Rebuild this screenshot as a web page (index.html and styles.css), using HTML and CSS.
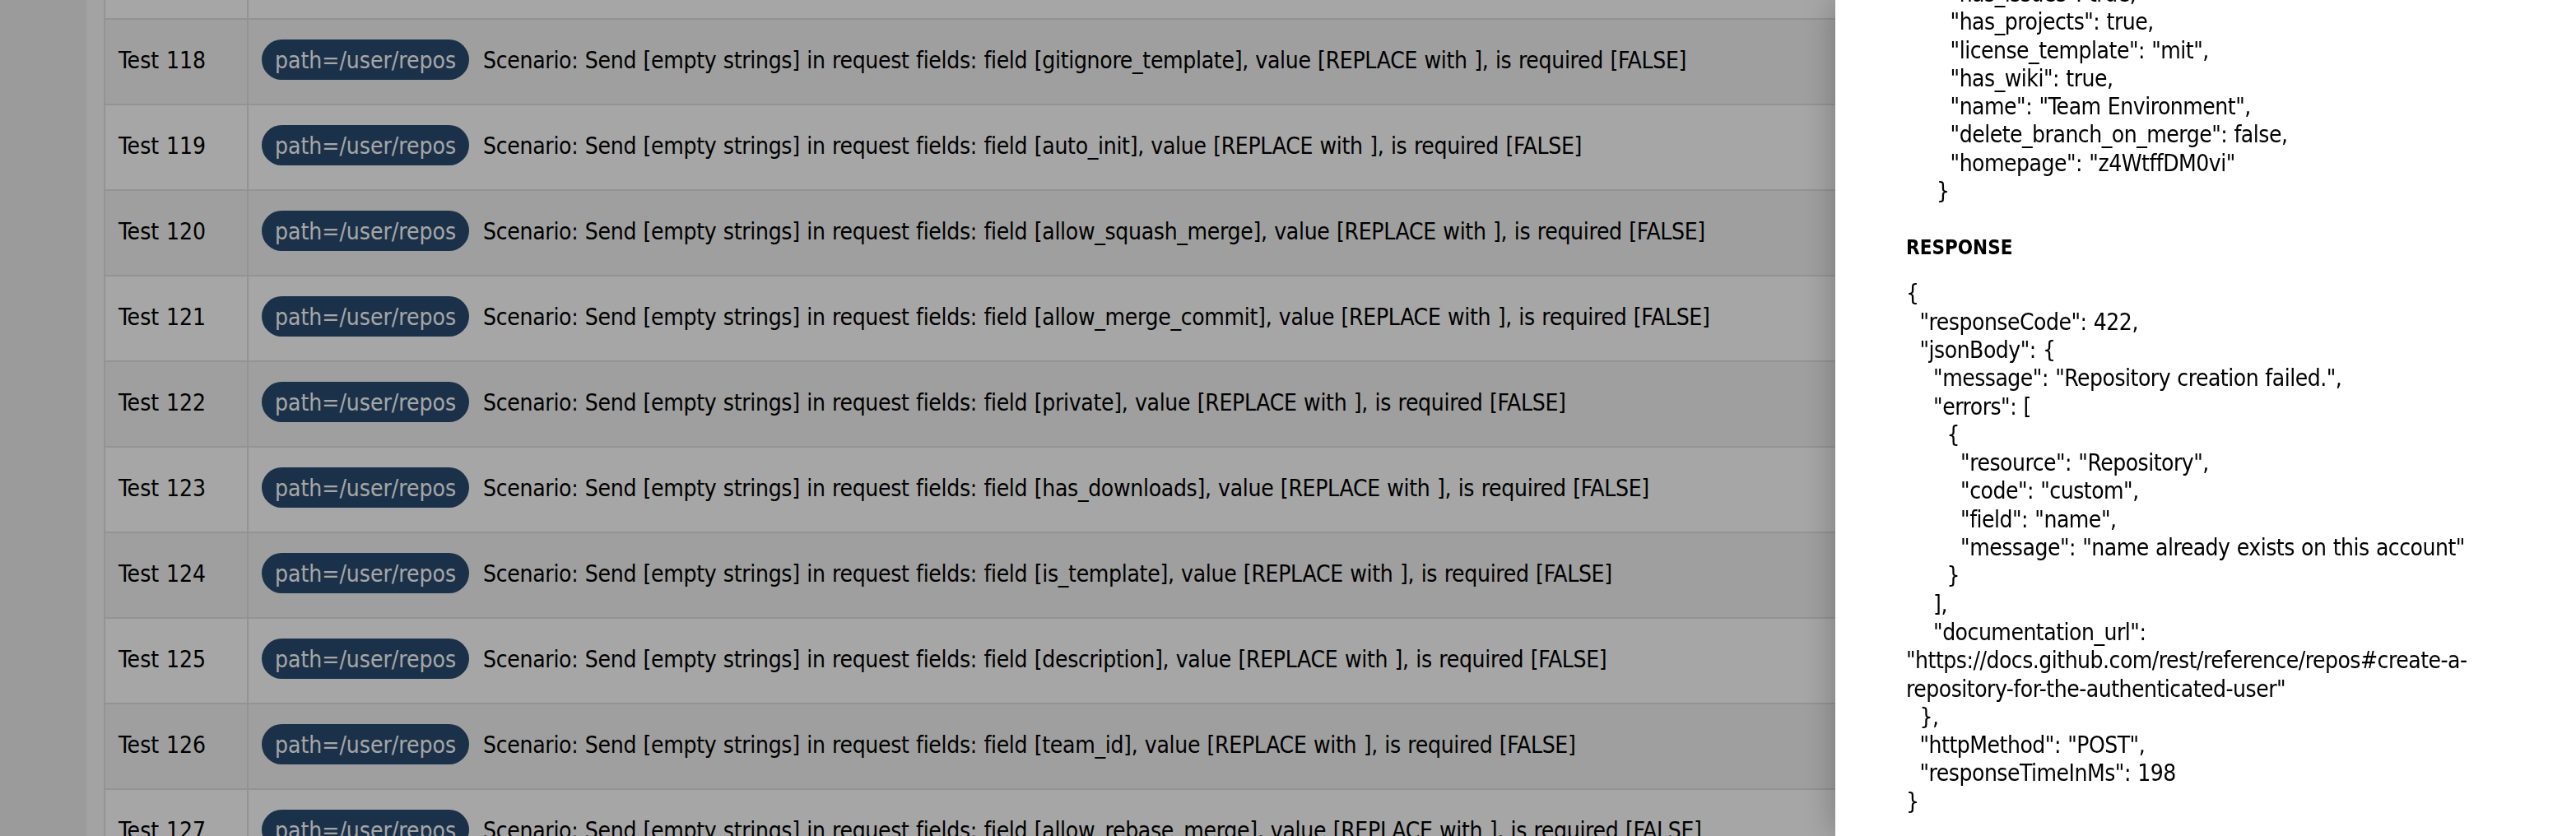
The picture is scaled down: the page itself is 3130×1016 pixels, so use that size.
FILE: index.html
```html
<!DOCTYPE html>
<html lang="en">
<head>
<meta charset="utf-8">
<title>Test run results</title>
<link rel="stylesheet" href="styles.css">
</head>
<body>
<div class="app">
  <aside class="sidebar"></aside>
  <main class="main">
    <table class="tests">
      <tbody>
        <tr><td class="name">Test 117</td><td class="desc"><span class="pill">path=/user/repos</span><span class="scenario">Scenario: Send [empty strings] in request fields: field [has_issues], value [REPLACE with ], is required [FALSE]</span></td></tr>
        <tr><td class="name">Test 118</td><td class="desc"><span class="pill">path=/user/repos</span><span class="scenario">Scenario: Send [empty strings] in request fields: field [gitignore_template], value [REPLACE with ], is required [FALSE]</span></td></tr>
        <tr><td class="name">Test 119</td><td class="desc"><span class="pill">path=/user/repos</span><span class="scenario">Scenario: Send [empty strings] in request fields: field [auto_init], value [REPLACE with ], is required [FALSE]</span></td></tr>
        <tr><td class="name">Test 120</td><td class="desc"><span class="pill">path=/user/repos</span><span class="scenario">Scenario: Send [empty strings] in request fields: field [allow_squash_merge], value [REPLACE with ], is required [FALSE]</span></td></tr>
        <tr><td class="name">Test 121</td><td class="desc"><span class="pill">path=/user/repos</span><span class="scenario">Scenario: Send [empty strings] in request fields: field [allow_merge_commit], value [REPLACE with ], is required [FALSE]</span></td></tr>
        <tr><td class="name">Test 122</td><td class="desc"><span class="pill">path=/user/repos</span><span class="scenario">Scenario: Send [empty strings] in request fields: field [private], value [REPLACE with ], is required [FALSE]</span></td></tr>
        <tr><td class="name">Test 123</td><td class="desc"><span class="pill">path=/user/repos</span><span class="scenario">Scenario: Send [empty strings] in request fields: field [has_downloads], value [REPLACE with ], is required [FALSE]</span></td></tr>
        <tr><td class="name">Test 124</td><td class="desc"><span class="pill">path=/user/repos</span><span class="scenario">Scenario: Send [empty strings] in request fields: field [is_template], value [REPLACE with ], is required [FALSE]</span></td></tr>
        <tr><td class="name">Test 125</td><td class="desc"><span class="pill">path=/user/repos</span><span class="scenario">Scenario: Send [empty strings] in request fields: field [description], value [REPLACE with ], is required [FALSE]</span></td></tr>
        <tr><td class="name">Test 126</td><td class="desc"><span class="pill">path=/user/repos</span><span class="scenario">Scenario: Send [empty strings] in request fields: field [team_id], value [REPLACE with ], is required [FALSE]</span></td></tr>
        <tr><td class="name">Test 127</td><td class="desc"><span class="pill">path=/user/repos</span><span class="scenario">Scenario: Send [empty strings] in request fields: field [allow_rebase_merge], value [REPLACE with ], is required [FALSE]</span></td></tr>
        <tr><td class="name">Test 128</td><td class="desc"><span class="pill">path=/user/repos</span><span class="scenario">Scenario: Send [empty strings] in request fields: field [delete_branch_on_merge], value [REPLACE with ], is required [FALSE]</span></td></tr>
      </tbody>
    </table>
  </main>
</div>
<div class="backdrop"></div>
<aside class="drawer">
  <div class="drawer-body">
<pre class="json request">      "has_issues": true,
      "has_projects": true,
      "license_template": "mit",
      "has_wiki": true,
      "name": "Team Environment",
      "delete_branch_on_merge": false,
      "homepage": "z4WtffDM0vi"
    }</pre>
    <h4 class="section-title">RESPONSE</h4>
<pre class="json response">{
  "responseCode": 422,
  "jsonBody": {
    "message": "Repository creation failed.",
    "errors": [
      {
        "resource": "Repository",
        "code": "custom",
        "field": "name",
        "message": "name already exists on this account"
      }
    ],
    "documentation_url": "https://docs.github.com/rest/reference/repos#create-a-repository-for-the-authenticated-user"
  },
  "httpMethod": "POST",
  "responseTimeInMs": 198
}</pre>
  </div>
</aside>
</body>
</html>
```

FILE: styles.css
```css
html, body {
  margin: 0;
  padding: 0;
  height: 100%;
  overflow: hidden;
}

body {
  font-family: "DejaVu Sans Condensed", "DejaVu Sans", "Liberation Sans", sans-serif;
  font-stretch: condensed;
  font-size: 28px;
  line-height: 34px;
  word-spacing: 0.76px;
  color: #000;
  background: #fbfbfb;
}

.app {
  display: flex;
  height: 100vh;
}

.sidebar {
  flex: 0 0 105px;
  background: #eeeeee;
}

.main {
  flex: 1 1 auto;
  padding: 0 20px 0 21px;
  background: #fbfbfb;
  overflow: hidden;
}

/* list is scrolled: first row partly above the viewport */
.tests {
  width: 100%;
  margin-top: -80px;
  border-collapse: separate;
  border-spacing: 0;
  border-left: 2px solid #e2e2e2;
}

.tests tr {
  background: #ffffff;
}

.tests tr:nth-child(even) {
  background: #f5f5f5;
}

.tests td {
  padding: 24px 16px 29px;
  border-bottom: 2px solid #e2e2e2;
  vertical-align: baseline;
  white-space: nowrap;
}

.tests td.name {
  width: 174px;
  box-sizing: border-box;
  border-right: 2px solid #e2e2e2;
}

.pill {
  display: inline-block;
  padding: 9px 16px 6px;
  margin-right: 17px;
  line-height: 34px;
  border-radius: 25px;
  background: #2a4b70;
  color: #ffffff;
}

.scenario {
  letter-spacing: -0.3px;
}

.backdrop {
  position: fixed;
  inset: 0;
  background: rgba(0, 0, 0, 0.35);
}

.drawer {
  position: fixed;
  top: 0;
  right: 0;
  bottom: 0;
  width: 900px;
  background: #ffffff;
  box-shadow: 0 0 40px rgba(0, 0, 0, 0.28);
  overflow: hidden;
}

.drawer-body {
  padding: 0 44px 0 86px;
}

.json {
  margin: 0;
  font-family: inherit;
  font-size: 28px;
  line-height: 34.3px;
  letter-spacing: -0.5px;
  white-space: pre-wrap;
  color: #000;
}

/* drawer content is scrolled: first line partly above the viewport */
.request {
  margin-top: -24px;
  padding-left: 4px;
}

.section-title {
  margin: 37px 0 24px;
  font-size: 24px;
  line-height: 29px;
  font-weight: bold;
}
```
